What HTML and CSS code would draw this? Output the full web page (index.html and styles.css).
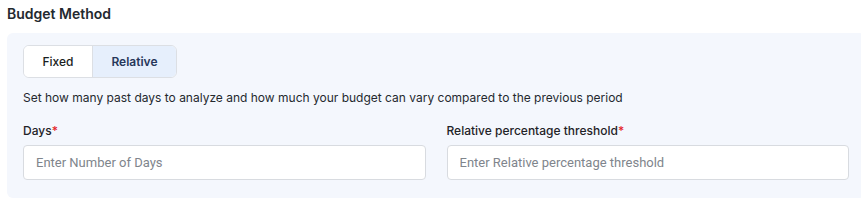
FILE: index.html
```html
<!DOCTYPE html>
<html>
<head>
<meta charset="utf-8">
<link rel="stylesheet" href="styles.css">
</head>
<body>
<div class="page">
  <h2 class="title">Budget Method</h2>
  <div class="panel">
    <div class="toggle">
      <button class="seg">Fixed</button>
      <button class="seg active">Relative</button>
    </div>
    <p class="desc">Set how many past days to analyze and how much your budget can vary compared to the previous period</p>
    <div class="fields">
      <div class="field">
        <label class="label">Days<span class="req">*</span></label>
        <input class="input" type="text" placeholder="Enter Number of Days">
      </div>
      <div class="field">
        <label class="label">Relative percentage threshold<span class="req">*</span></label>
        <input class="input" type="text" placeholder="Enter Relative percentage threshold">
      </div>
    </div>
  </div>
</div>
</body>
</html>
```
FILE: styles.css
```css
html, body {
  margin: 0;
  padding: 0;
  background: #ffffff;
  overflow: hidden;
}
body {
  font-family: Inter, "Noto Sans", sans-serif;
  color: #1f2328;
}
.page {
  padding: 4px 0 0 7px;
  width: 858px;
}
.title {
  margin: 0;
  font-size: 14px;
  font-weight: 600;
  line-height: 20px;
  color: #24292f;
  height: 29px;
}
.panel {
  background: #f4f7fd;
  border-radius: 6px;
  padding: 12px 16px 18px 16px;
}
.toggle {
  display: inline-flex;
  border: 1px solid #dcdfe4;
  border-radius: 6px;
  overflow: hidden;
  background: #ffffff;
}
.seg {
  font-family: Inter, sans-serif;
  font-size: 12px;
  font-weight: 500;
  border: none;
  background: #ffffff;
  color: #1a1d21;
  height: 31px;
  padding: 0;
  margin: 0;
  width: 68px;
}
.seg.active {
  background: #e6effc;
  color: #27375a;
  font-weight: 600;
  width: 84px;
  border-left: 1px solid #dcdfe4;
}
.desc {
  margin: 12px 0 0 0;
  font-size: 12px;
  line-height: 16px;
  color: #24292f;
}
.fields {
  display: grid;
  grid-template-columns: 1fr 1fr;
  column-gap: 21px;
  margin-top: 17px;
}
.field {
  display: flex;
  flex-direction: column;
}
.label {
  font-size: 12px;
  font-weight: 500;
  line-height: 16px;
  color: #1f2328;
  margin-bottom: 6px;
}
.req {
  color: #e5252a;
}
.input {
  height: 35px;
  box-sizing: border-box;
  border: 1px solid #d8dbe0;
  border-radius: 4px;
  background: #ffffff;
  padding: 0 12px;
  font-family: Roboto, Arial, sans-serif;
  font-size: 13px;
  color: #333;
  outline: none;
}
.input::placeholder {
  color: #80858c;
}
```
